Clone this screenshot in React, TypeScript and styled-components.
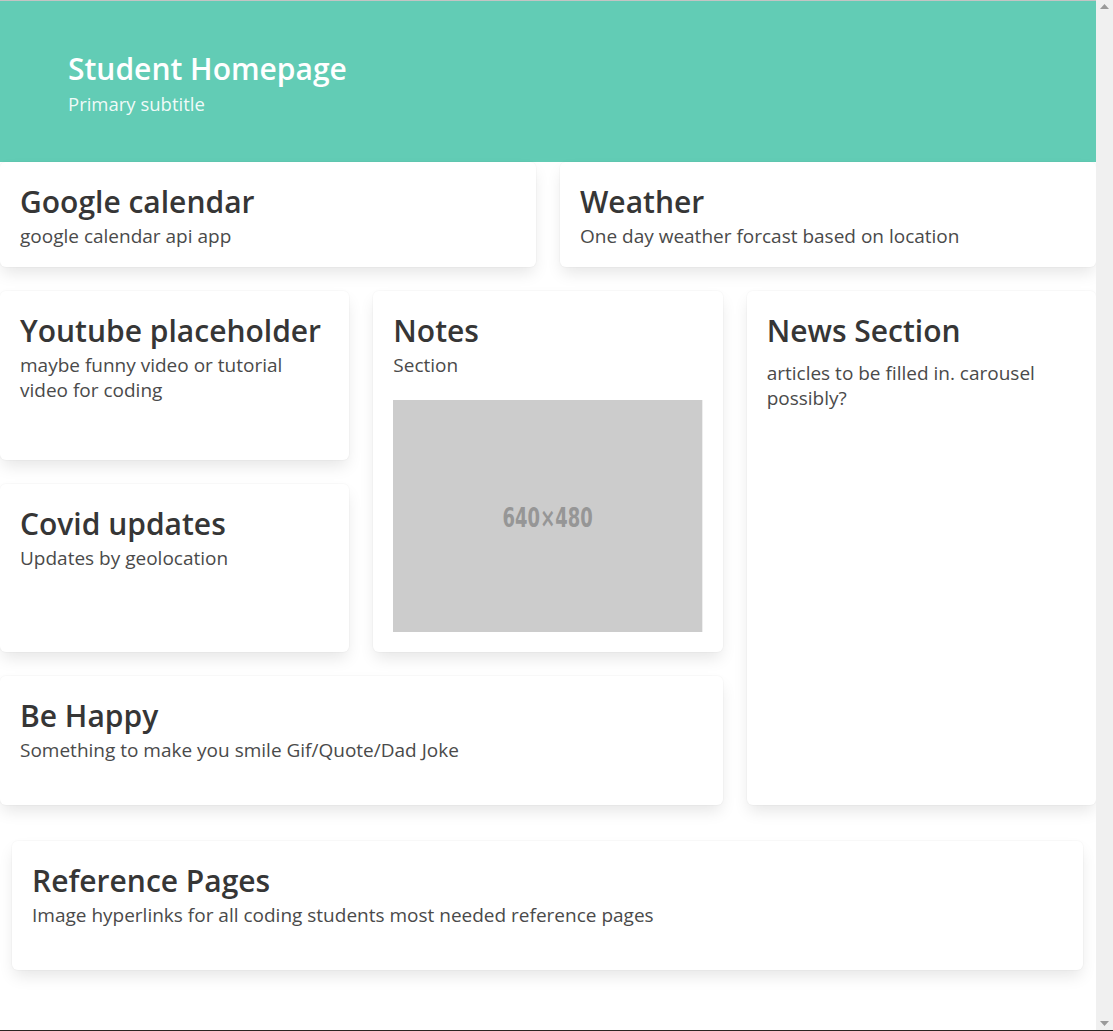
import React from "react";
import styled, { createGlobalStyle } from "styled-components";

const GlobalStyle = createGlobalStyle`
  html {
    font-size: 16px;
  }
  body {
    margin: 0;
    background: #ffffff;
    font-family: "Open Sans", "Noto Sans", sans-serif;
    color: #4a4a4a;
    -webkit-font-smoothing: antialiased;
  }
  * { box-sizing: border-box; }
`;

const Page = styled.div`
  margin-right: 17px;
`;

const Scrollbar = styled.div`
  position: fixed;
  top: 0;
  right: 0;
  bottom: 0;
  width: 17px;
  background: #f0f0f0;
  display: flex;
  flex-direction: column;
  justify-content: space-between;
  align-items: center;
  padding: 4px 0 5px;
  svg {
    display: block;
  }
`;

const WindowEdge = styled.div`
  position: fixed;
  left: 0;
  right: 0;
  bottom: 0;
  height: 1px;
  background: #2b2623;
`;

const Hero = styled.section`
  background: #62ccb5;
  border-top: 1px solid #c4c4c4;
`;

const HeroBody = styled.div`
  padding: 50px 0 46px;
`;

const Container = styled.div`
  max-width: 960px;
  margin: 0 auto;
`;

const HeroTitle = styled.h1`
  margin: 0 0 4px;
  color: #ffffff;
  font-size: 30px;
  font-weight: 600;
  line-height: 36px;
`;

const HeroSubtitle = styled.h2`
  margin: 0;
  color: rgba(255, 255, 255, 0.92);
  font-size: 18.5px;
  font-weight: 400;
  line-height: 25px;
`;

const Main = styled.main`
  display: flex;
  flex-direction: column;
`;

const TopRow = styled.div`
  display: grid;
  grid-template-columns: 1fr 1fr;
  gap: 24px;
`;

const MiddleGrid = styled.div`
  display: grid;
  grid-template-columns: 1fr 1fr 1fr;
  grid-template-rows: 1fr 1fr auto;
  gap: 24px;
  margin-top: 24px;
`;

const Footer = styled.div`
  padding: 36px 13px 61px 12px;
`;

const Box = styled.div<{ $area?: string; $tail?: boolean }>`
  grid-area: ${(p) => p.$area || "auto"};
  background: #ffffff;
  border-radius: 6px;
  box-shadow: 0 0.5em 1em -0.125em rgba(10, 10, 10, 0.1),
    0 0 0 1px rgba(10, 10, 10, 0.02);
  padding: 22px 20px ${(p) => (p.$tail ? "42px" : "18px")};
  display: flex;
  flex-direction: column;
`;

const Title = styled.p`
  margin: 0 0 4px;
  color: #363636;
  font-size: 30px;
  font-weight: 600;
  line-height: 36px;
`;

const Subtitle = styled.p<{ $spaced?: boolean }>`
  margin: ${(p) => (p.$spaced ? "8px" : "0")} 0 0;
  color: #4a4a4a;
  font-size: 19px;
  font-weight: 400;
  line-height: 25px;
`;

const Figure = styled.figure`
  margin: 22px 0 2px;
  width: 100%;
  aspect-ratio: 4 / 3;
  svg {
    display: block;
    width: 100%;
    height: 100%;
  }
`;

const Placeholder = () => (
  <svg viewBox="0 0 309 232" preserveAspectRatio="none">
    <rect x="0" y="0" width="309" height="232" fill="#cccccc" />
    <text
      x="154.5"
      y="127"
      textAnchor="middle"
      fill="#969696"
      fontFamily="'DejaVu Sans Condensed', 'Liberation Sans Narrow', sans-serif"
      fontWeight="bold"
      fontSize="27"
      textLength="90"
      lengthAdjust="spacingAndGlyphs"
    >
      640×480
    </text>
  </svg>
);

export default function App() {
  return (
    <>
      <GlobalStyle />
      <Page>
        <Hero>
          <HeroBody>
            <Container>
              <HeroTitle>Student Homepage</HeroTitle>
              <HeroSubtitle>Primary subtitle</HeroSubtitle>
            </Container>
          </HeroBody>
        </Hero>
        <Main>
          <TopRow>
            <Box>
              <Title>Google calendar</Title>
              <Subtitle>google calendar api app</Subtitle>
            </Box>
            <Box>
              <Title>Weather</Title>
              <Subtitle>One day weather forcast based on location</Subtitle>
            </Box>
          </TopRow>
          <MiddleGrid>
            <Box $area="1 / 1 / 2 / 2">
              <Title>Youtube placeholder</Title>
              <Subtitle>maybe funny video or tutorial video for coding</Subtitle>
            </Box>
            <Box $area="2 / 1 / 3 / 2">
              <Title>Covid updates</Title>
              <Subtitle>Updates by geolocation</Subtitle>
            </Box>
            <Box $area="1 / 2 / 3 / 3">
              <Title>Notes</Title>
              <Subtitle>Section</Subtitle>
              <Figure>
                <Placeholder />
              </Figure>
            </Box>
            <Box $area="3 / 1 / 4 / 3" $tail>
              <Title>Be Happy</Title>
              <Subtitle>Something to make you smile Gif/Quote/Dad Joke</Subtitle>
            </Box>
            <Box $area="1 / 3 / 4 / 4">
              <Title>News Section</Title>
              <Subtitle $spaced>articles to be filled in. carousel possibly?</Subtitle>
            </Box>
          </MiddleGrid>
          <Footer>
            <Box $tail>
              <Title>Reference Pages</Title>
              <Subtitle>
                Image hyperlinks for all coding students most needed reference pages
              </Subtitle>
            </Box>
          </Footer>
        </Main>
      </Page>
      <Scrollbar>
        <svg width="9" height="5" viewBox="0 0 9 5">
          <path d="M0 5 L4.5 0 L9 5 Z" fill="#9a9a9a" />
        </svg>
        <svg width="9" height="5" viewBox="0 0 9 5">
          <path d="M0 0 L9 0 L4.5 5 Z" fill="#9a9a9a" />
        </svg>
      </Scrollbar>
      <WindowEdge />
    </>
  );
}
